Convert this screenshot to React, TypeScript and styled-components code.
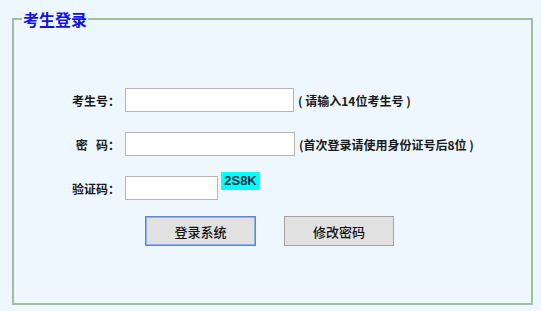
import styled, { createGlobalStyle } from "styled-components";

const GlobalStyle = createGlobalStyle`
  html, body {
    margin: 0;
    padding: 0;
    background: #eff7fe;
  }
  body {
    font-family: "Noto Sans CJK SC", "Noto Sans", sans-serif;
    color: #1a1a1a;
  }
`;

const Page = styled.div`
  width: 541px;
  height: 311px;
  padding: 10px 8px 0 12px;
  box-sizing: border-box;
`;

const Box = styled.fieldset`
  margin: 0;
  padding: 0;
  height: 295px;
  box-sizing: border-box;
  border: 2px solid #9dc09e;
  min-width: 0;
`;

const Legend = styled.legend`
  margin-left: 8px;
  padding: 0 1px;
  font-size: 16px;
  line-height: 18px;
  font-weight: 700;
  color: #1010e8;
`;

const Form = styled.div`
  display: flex;
  flex-direction: column;
  padding-top: 60px;
`;

const Row = styled.div<{ $gap?: number }>`
  display: flex;
  align-items: center;
  height: 24px;
  margin-bottom: ${(p) => p.$gap ?? 20}px;
`;

const Label = styled.label`
  width: 106px;
  text-align: right;
  padding-right: 5px;
  font-size: 12px;
  font-weight: 700;
  white-space: pre;
`;

const Input = styled.input<{ $w: number }>`
  width: ${(p) => p.$w}px;
  height: 24px;
  box-sizing: border-box;
  border: 1px solid #b4b4b4;
  background: #fff;
  margin: 0;
  padding: 0 3px;
  outline: none;
`;

const Hint = styled.span`
  margin-left: 4px;
  font-size: 12px;
  font-weight: 700;
  white-space: pre;
`;

const Captcha = styled.span`
  align-self: flex-start;
  margin-top: -4px;
  margin-left: 3px;
  width: 39px;
  height: 18px;
  background: #00ffff;
  color: #0b3340;
  font-family: "Liberation Sans", Arial, sans-serif;
  font-size: 13px;
  font-weight: 700;
  line-height: 17px;
  text-align: center;
`;

const Buttons = styled.div`
  display: flex;
  gap: 28px;
  padding-left: 131px;
`;

const Button = styled.button<{ $primary?: boolean }>`
  width: ${(p) => (p.$primary ? 111 : 110)}px;
  height: 30px;
  box-sizing: border-box;
  margin: 0;
  background: #e1e1e1;
  border: 1px solid ${(p) => (p.$primary ? "#5b86d6" : "#a3a3a3")};
  box-shadow: ${(p) => (p.$primary ? "inset 0 0 0 1px #8fb0e6" : "none")};
  font-family: "Noto Sans CJK SC", "Noto Sans", sans-serif;
  font-size: 13px;
  font-weight: 500;
  color: #111;
`;

export default function App() {
  return (
    <>
      <GlobalStyle />
      <Page>
        <Box>
          <Legend>考生登录</Legend>
          <Form>
            <Row>
              <Label>考生号：</Label>
              <Input $w={169} />
              <Hint>( 请输入14位考生号 )</Hint>
            </Row>
            <Row>
              <Label>{"密\u00a0\u00a0\u00a0码："}</Label>
              <Input $w={170} type="password" />
              <Hint>(首次登录请使用身份证号后8位 )</Hint>
            </Row>
            <Row $gap={16}>
              <Label>验证码：</Label>
              <Input $w={93} />
              <Captcha>2S8K</Captcha>
            </Row>
            <Buttons>
              <Button $primary>登录系统</Button>
              <Button>修改密码</Button>
            </Buttons>
          </Form>
        </Box>
      </Page>
    </>
  );
}
